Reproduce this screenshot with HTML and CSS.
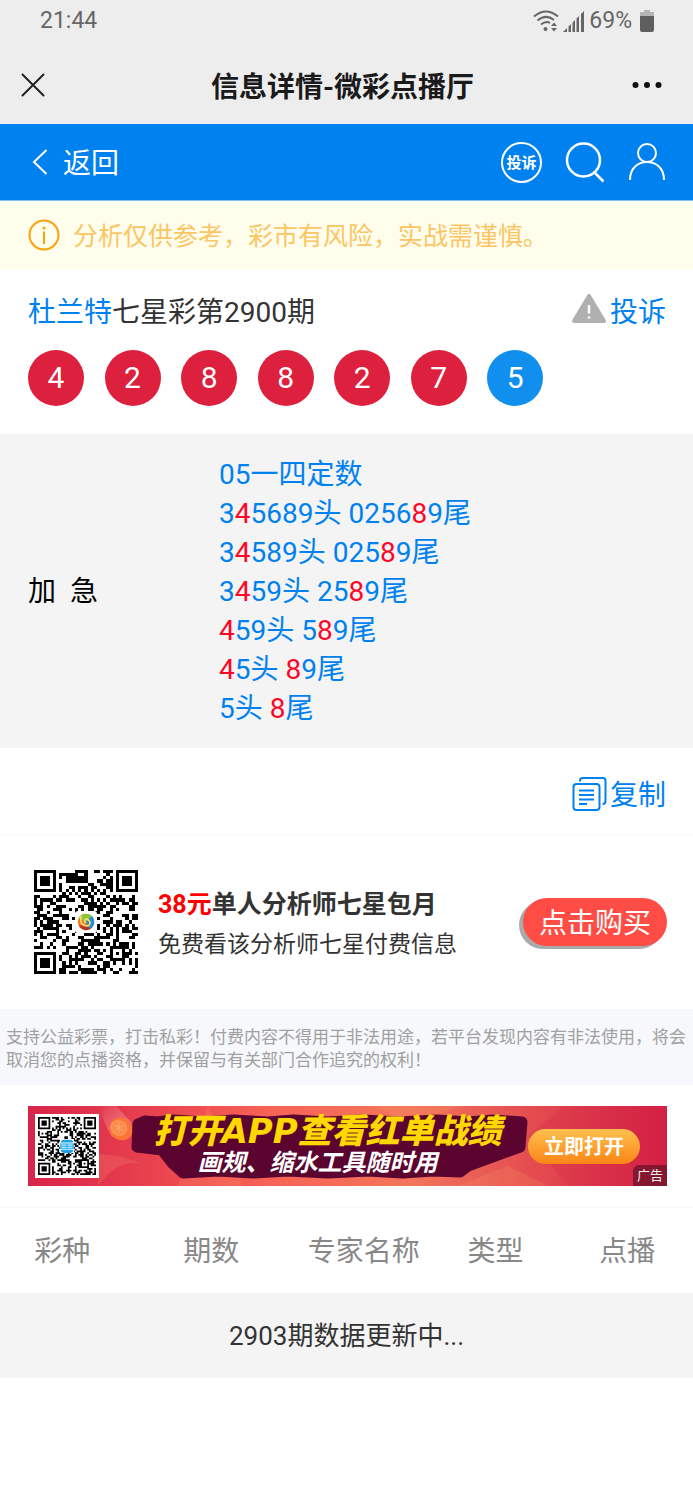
FILE: index.html
```html
<!DOCTYPE html>
<html lang="zh-CN">
<head>
    <meta charset="UTF-8">
    <meta name="viewport" content="width=device-width, initial-scale=1.0">
    <title>信息详情-微彩点播厅</title>
    <link rel="stylesheet" href="styles.css">
</head>
<body>

    <div class="status-bar">
        <span>21:44</span>
        <div class="status-icons">
            <svg width="26" height="22" viewBox="0 0 26 22" fill="none" stroke="#666" stroke-width="2">
                <path d="M1 6.500Q13-3.500 25 6.500M4.500 10.500Q13 3.500 21 10M8 14.500Q13 10.500 17 13"/>
                <circle cx="12.500" cy="19" r="2" fill="#666" stroke="none"/>
                <path d="M18 16L21 12.500L24 16ZM18 18H24L21 21.500Z" fill="#666" stroke="none"/>
            </svg>
            <svg width="22" height="22" viewBox="0 0 22 22" fill="#666">
                <path d="M0 22L4 18V22ZM5.500 16.500L8 14V22H5.500ZM9.500 12.500L12 10V22H9.500ZM13.500 8.500L16 6V22H13.500ZM18 4L21 1V22H18Z"/>
            </svg>
            <span>69%</span>
            <svg class="battery" width="14" height="22" viewBox="0 0 14 22">
                <path d="M4 0H10V2H14V7H0V2H4Z" fill="#b5b5b5"/>
                <path d="M0 6H14V20Q14 22 12 22H2Q0 22 0 20Z" fill="#5f5f5f"/>
            </svg>
        </div>
    </div>

    <div class="title-bar">
        <button class="icon-btn" aria-label="关闭">
            <svg width="24" height="24" viewBox="0 0 24 24" stroke="#222" stroke-width="2" stroke-linecap="round">
                <path d="M1.500 1.500L22.500 22.500M22.500 1.500L1.500 22.500"/>
            </svg>
        </button>
        <h1>信息详情-微彩点播厅</h1>
        <button class="icon-btn" aria-label="更多">
            <svg width="34" height="8" viewBox="0 0 34 8" fill="#111">
                <circle cx="5.500" cy="4" r="3"/><circle cx="17" cy="4" r="3"/><circle cx="28.500" cy="4" r="3"/>
            </svg>
        </button>
    </div>

    <div class="nav">
        <a class="back" href="#">
            <svg width="16" height="26" viewBox="0 0 16 26" fill="none" stroke="#fff" stroke-width="2">
                <path d="M14.500 1L2 13L14.500 25"/>
            </svg>
            <span>返回</span>
        </a>
        <div class="nav-icons">
            <a class="round" href="#">投诉</a>
            <a href="#" aria-label="搜索">
                <svg width="40" height="42" viewBox="0 0 40 42" fill="none" stroke="#fff" stroke-width="2.500">
                    <circle cx="18.500" cy="19" r="16.500"/>
                    <path d="M29 31L38.500 40.500"/>
                </svg>
            </a>
            <a href="#" aria-label="我的">
                <svg width="38" height="42" viewBox="0 0 38 42" fill="none" stroke="#fff" stroke-width="2">
                    <circle cx="19" cy="12" r="9"/>
                    <path d="M2 39C2 27 10 21 19 21S36 27 36 39"/>
                </svg>
            </a>
        </div>
    </div>

    <div class="notice">
        <svg width="32" height="32" viewBox="0 0 32 32" fill="none" stroke="#ff9f0a" stroke-width="2">
            <circle cx="16" cy="16" r="14.500"/>
            <path d="M16 12.500V25"/>
            <circle cx="16" cy="9" r="1.500" fill="#ff9f0a" stroke="none"/>
        </svg>
        <span>分析仅供参考，彩市有风险，实战需谨慎。</span>
    </div>

    <div class="issue">
        <div class="issue-head">
            <h2><a href="#">杜兰特</a>七星彩第2900期</h2>
            <a class="action" href="#">
                <svg width="36" height="32" viewBox="0 0 36 32">
                    <path d="M18 3L33 28H3Z" fill="#b0b0b0" stroke="#b0b0b0" stroke-width="4" stroke-linejoin="round"/>
                    <path d="M18 12V20.500M18 23.500V25.500" stroke="#fff" stroke-width="2.500"/>
                </svg>
                投诉
            </a>
        </div>
        <div class="balls">
            <span class="ball">4</span>
            <span class="ball">2</span>
            <span class="ball">8</span>
            <span class="ball">8</span>
            <span class="ball">2</span>
            <span class="ball">7</span>
            <span class="ball blue">5</span>
        </div>
    </div>

    <div class="content">
        <div class="label">加&nbsp;&nbsp;急</div>
        <div class="numbers">
            05一四定数<br>
            3<b>4</b>5689头 0256<b>8</b>9尾<br>
            3<b>4</b>589头 025<b>8</b>9尾<br>
            3<b>4</b>59头 25<b>8</b>9尾<br>
            <b>4</b>59头 5<b>8</b>9尾<br>
            <b>4</b>5头 <b>8</b>9尾<br>
            5头 <b>8</b>尾
        </div>
    </div>

    <div class="copy">
        <button class="action">
            <svg width="35" height="36" viewBox="0 0 35 36" fill="none" stroke="#0081f0" stroke-width="2">
                <rect x="1.500" y="8" width="26" height="26" rx="3"/>
                <path d="M8 5.500V4.500Q8 2 10.500 2H31Q33.500 2 33.500 4.500V25Q33.500 28 30.500 28"/>
                <path d="M7 14.500H22M7 19H22M7 23.500H22M7 28H15"/>
            </svg>
            复制
        </button>
    </div>

    <div class="buy">
        <svg class="qr" data-seed="38" viewBox="0 0 33 33" shape-rendering="crispEdges">
            <path class="modules"/>
            <g shape-rendering="auto">
                <rect x="13" y="13" width="7" height="7" rx="1" fill="#fff"/>
                <circle cx="16.500" cy="16.500" r="2.600" fill="#f07a22"/>
                <path d="M14.200 15.300A2.600 2.600 0 0 1 18.900 15.500L16.500 16.500Z" fill="#8fc43c"/>
                <path d="M18.300 14.600A2.600 2.600 0 0 1 17.500 18.900L16.500 16.500Z" fill="#2a8fd0"/>
                <path d="M18 18.600A2.600 2.600 0 0 1 14.200 17.700L16.500 17.300Z" fill="#b5372a"/>
                <path d="M15 14.600Q14.200 18 17.300 17.700Q18.500 16.500 16.800 15.500Q15.600 15.800 16.300 16.900" fill="none" stroke="#fde36a" stroke-width=".5"/>
            </g>
        </svg>
        <div class="buy-text">
            <h3><span>38元</span>单人分析师七星包月</h3>
            <p>免费看该分析师七星付费信息</p>
        </div>
        <button class="buy-btn">点击购买</button>
    </div>

    <p class="tips">支持公益彩票，打击私彩！付费内容不得用于非法用途，若平台发现内容有非法使用，将会取消您的点播资格，并保留与有关部门合作追究的权利！</p>

    <div class="ad">
        <a class="banner" href="#">
            <svg class="banner-bg" viewBox="0 0 639 80" preserveAspectRatio="none">
                <defs>
                    <linearGradient id="bg" x1="0" x2="1" y1="0" y2="0">
                        <stop offset="0" stop-color="#d8254a"/>
                        <stop offset=".15" stop-color="#e53b4d"/>
                        <stop offset=".38" stop-color="#f86356"/>
                        <stop offset=".6" stop-color="#f2755b"/>
                        <stop offset=".8" stop-color="#e34a4f"/>
                        <stop offset="1" stop-color="#d42145"/>
                    </linearGradient>
                    <linearGradient id="trail" x1="0" x2="1" y1="0" y2="1">
                        <stop offset="0" stop-color="#fff" stop-opacity="0"/>
                        <stop offset="1" stop-color="#ffb29b" stop-opacity=".5"/>
                    </linearGradient>
                </defs>
                <rect width="639" height="80" fill="url(#bg)"/>
                <path d="M345 0H430L390 20ZM430 80L480 60L520 80ZM180 0L215 80H150Z" fill="#ff9a68" opacity=".2"/>
                <path d="M535 0L500 30L540 80H639V0Z" fill="#d02048" opacity=".2"/>
                <path d="M71 48Q95 49 114 58Q90 52 70 80V48Z" fill="#f06a60" opacity=".4"/>
                <path d="M72 0H88L104 17L84 31Q74 14 72 0Z" fill="url(#trail)"/>
                <ellipse cx="93" cy="23" rx="12" ry="11" fill="#fb7438" transform="rotate(35 93 23)"/>
                <ellipse cx="91" cy="22" rx="8" ry="7" fill="#fc8a4c" stroke="#ffa05c" transform="rotate(35 91 22)"/>
                <path d="M87 19L95 25M91 18V26M87 24L95 20" stroke="#ffa96e" fill="none"/>
                <path d="M110 18L117 15L130 16L145 14L175 16L205 14L240 16L265 14L300 16L335 14L370 16L410 14L440 16L465 14L494 16L492 41L440 60L432 66L405 65L375 67L340 65L300 67L260 65L225 67L190 65L155 67L145 58L134 44L109 41Z" fill="#5b0430" stroke="#5b0430" stroke-width="11" stroke-linejoin="round"/>
            </svg>
            <span class="banner-qr">
                <svg class="qr" data-seed="911" viewBox="0 0 33 33">
                    <path class="modules"/>
                    <rect x="12.500" y="12.500" width="8" height="8" fill="#fff"/>
                    <path d="M13 14.500Q13 13 15 13H18Q20 13 20 14.500ZM13 18.700H20Q20 20.500 18 20.500H15Q13 20.500 13 18.700Z" fill="#18a0e8"/>
                    <rect x="12.500" y="15" width="8" height="3.300" fill="#4bb8f0"/>
                    <path d="M13.500 16H15.800M13.500 17.300H15.800M17 16H19.500M17 17.300H19.500" stroke="#d8f1ff" stroke-width=".5"/>
                </svg>
            </span>
            <span class="banner-text">
                <strong>打开APP查看红单战绩</strong>
                <em>画规、缩水工具随时用</em>
            </span>
            <span class="banner-btn">立即打开</span>
            <span class="ad-tag">广告</span>
        </a>
    </div>

    <table class="list">
        <thead>
            <tr>
                <th class="kind">彩种</th>
                <th class="period">期数</th>
                <th>专家名称</th>
                <th>类型</th>
                <th>点播</th>
            </tr>
        </thead>
        <tbody>
            <tr>
                <td colspan="5">2903期数据更新中...</td>
            </tr>
        </tbody>
    </table>

    <script>
        // Fill each code with its modules, three finders and one alignment mark
        const SIZE = 33;

        function ring(x, y, cx, cy) {
            return Math.max(Math.abs(x - cx), Math.abs(y - cy));
        }

        function isDark(x, y, noise) {
            const finders = [[3, 3], [SIZE - 4, 3], [3, SIZE - 4]];
            for (const [cx, cy] of finders) {
                const r = ring(x, y, cx, cy);
                if (r <= 4) return r <= 1 || r === 3;
            }
            const r = ring(x, y, 26, 26);
            if (r <= 2) return r !== 1;
            if (x === 6 || y === 6) return (x + y) % 2 === 0;
            return noise > 0.5;
        }

        document.querySelectorAll(".qr").forEach(svg => {
            let seed = Number(svg.dataset.seed);
            let d = "";
            for (let y = 0; y < SIZE; y++) {
                for (let x = 0; x < SIZE; x++) {
                    seed = (seed * 1103515245 + 12345) % 2147483648;
                    if (isDark(x, y, seed / 2147483648)) {
                        d += `M${x} ${y}h1v1h-1z`;
                    }
                }
            }
            svg.querySelector(".modules").setAttribute("d", d);
        });
    </script>

</body>
</html>
```
FILE: styles.css
```css
* {
    box-sizing: border-box;
}
body {
    margin: 0;
    background: #fff;
    color: #333;
    font-family: Roboto, "Noto Sans CJK SC", sans-serif;
    font-size: 28px;
    line-height: 40px;
}
h1, h2, h3, p {
    margin: 0;
}
h1, h2 {
    font-size: 28px;
}
h2 {
    font-weight: 400;
}
a {
    color: #0081f0;
    text-decoration: none;
}
button {
    border: 0;
    padding: 0;
    background: none;
    font: inherit;
    cursor: pointer;
}
svg {
    display: block;
    flex-shrink: 0;
}

/* top bars */
.status-bar {
    display: flex;
    justify-content: space-between;
    align-items: center;
    height: 42px;
    padding: 0 39px 0 40px;
    background: #ededed;
    color: #666;
    font-size: 23px;
}
.status-icons {
    display: flex;
    align-items: center;
    gap: 4px;
}
.battery {
    margin-left: 4px;
}
.title-bar {
    display: flex;
    justify-content: space-between;
    align-items: center;
    height: 82px;
    padding: 4px 29px 0 21px;
    background: #ededed;
}
.title-bar h1 {
    padding-top: 6px;
    color: #1a1a1a;
}
.icon-btn {
    width: 34px;
}
.nav {
    display: flex;
    justify-content: space-between;
    align-items: center;
    height: 77px;
    padding: 0 27px 0 32px;
    background: #0081f0;
    border-bottom: 1px solid #7fc0ef;
}
.back {
    display: flex;
    align-items: center;
    gap: 15px;
    color: #fff;
}
.back span,
.notice span {
    padding-top: 4px;
}
.nav-icons {
    display: flex;
    align-items: center;
    gap: 23px;
}
.round {
    width: 41px;
    height: 41px;
    border: 2px solid #fff;
    border-radius: 50%;
    color: #fff;
    font-size: 15px;
    font-weight: 700;
    line-height: 38px;
    text-align: center;
}
.notice {
    display: flex;
    align-items: center;
    gap: 13px;
    height: 68px;
    padding: 0 28px;
    background: #fffeec;
    color: #fbc564;
    font-size: 25px;
}

/* issue and drawn numbers */
.issue {
    padding: 24px 27px 28px 28px;
}
.issue-head {
    display: flex;
    justify-content: space-between;
    align-items: center;
}
.action {
    display: flex;
    align-items: flex-start;
    gap: 3px;
    color: #0081f0;
}
.balls {
    display: grid;
    grid-template-columns: repeat(7, 12%);
    margin-top: 17px;
}
.ball {
    width: 56px;
    height: 56px;
    border-radius: 50%;
    background: #dc203d;
    color: #fff;
    font-size: 30px;
    line-height: 56px;
    text-align: center;
}
.ball.blue {
    background: #118fee;
}

.content {
    display: grid;
    grid-template-columns: 30% 1fr;
    align-items: center;
    padding: 21px 28px 20px;
    background: #f4f4f4;
}
.label {
    color: #000;
}
.numbers {
    color: #0081f0;
    line-height: 39px;
}
.numbers b {
    color: #ff0628;
    font-weight: 400;
}
.copy {
    display: flex;
    justify-content: flex-end;
    padding: 28px 27px 18px;
    border-bottom: 2px solid #fafafa;
}

/* monthly plan */
.buy {
    display: flex;
    align-items: center;
    padding: 34px 26px 35px 34px;
}
.qr {
    width: 104px;
    height: 104px;
}
.buy-text {
    flex: 1;
    margin-left: 20px;
    padding-top: 6px;
}
.buy-text h3 {
    font-size: 25px;
}
.buy-text span {
    color: #f00;
}
.buy-text p {
    font-size: 23px;
}
.buy-btn {
    height: 48px;
    padding: 4px 16px 0;
    border-radius: 24px;
    background: #ff4d46;
    box-shadow: -4px 3px #aaa;
    color: #fff;
}
.tips {
    padding: 17px 6px 13px;
    background: #f6f8fc;
    color: #a0a0a0;
    font-size: 17px;
    line-height: 23px;
}

/* ad banner */
.ad {
    padding: 21px 26px 21px 28px;
    border-bottom: 1px solid #fafafa;
}
.banner {
    position: relative;
    display: flex;
    align-items: center;
    height: 80px;
    padding: 0 27px 0 7px;
    overflow: hidden;
}
.banner-bg {
    position: absolute;
    inset: 0;
    width: 100%;
    height: 100%;
}
.banner-qr {
    position: relative;
    padding: 3px;
    background: #fff;
}
.banner-qr .qr {
    width: 58px;
    height: 58px;
}
.banner-text {
    position: relative;
    flex: 1;
    padding-left: 28px;
    text-align: center;
    white-space: nowrap;
    font-style: italic;
    font-weight: 700;
}
.banner-text strong,
.banner-text em {
    display: block;
}
.banner-text strong {
    color: #ffd800;
    font-family: "DejaVu Sans", "Noto Sans CJK SC", sans-serif;
    font-size: 34px;
    line-height: 34px;
}
.banner-text em {
    padding-right: 20px;
    color: #fff;
    font-size: 24px;
    line-height: 30px;
}
.banner-btn {
    position: relative;
    width: 112px;
    height: 35px;
    border-radius: 18px;
    background: linear-gradient(#ffc04e, #f98516);
    color: #fff;
    font-size: 20px;
    font-weight: 700;
    line-height: 36px;
    text-align: center;
}
.ad-tag {
    position: absolute;
    right: 0;
    bottom: 0;
    padding: 0 4px;
    border-top-left-radius: 6px;
    background: #85182f;
    color: #eee;
    font-size: 13px;
    line-height: 21px;
}

.list {
    width: 100%;
    border-collapse: collapse;
    table-layout: fixed;
    text-align: center;
}
.list th {
    height: 85px;
    padding: 2px 0 0;
    color: #888;
    font-weight: 400;
}
.list .kind {
    width: 18%;
}
.list .period {
    width: 25%;
}
.list td {
    height: 85px;
    padding: 0;
    background: #f4f4f4;
    font-size: 26px;
}
```
